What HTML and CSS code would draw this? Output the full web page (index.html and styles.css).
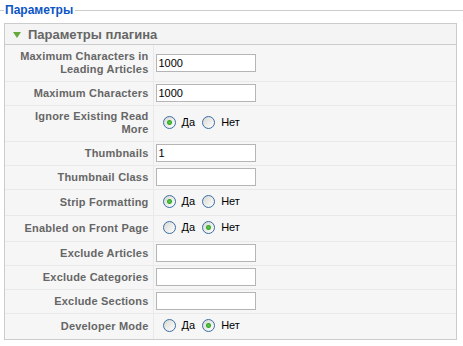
FILE: index.html
```html
<!DOCTYPE html>
<html lang="ru">
  <head>
    <meta charset="UTF-8" />
    <meta name="viewport" content="width=device-width, initial-scale=1.0" />
    <title>Параметры</title>
    <link rel="stylesheet" href="styles.css">
  </head>
  <body>
    <fieldset class="adminform">
      <legend>Параметры</legend>
      <div class="panel">
        <h3 class="title"><span class="toggler">Параметры плагина</span></h3>
        <table class="paramlist">
          <tr class="double">
            <td class="key">Maximum Characters in Leading Articles</td>
            <td class="value"><input type="text" class="text" value="1000" /></td>
          </tr>
          <tr>
            <td class="key">Maximum Characters</td>
            <td class="value"><input type="text" class="text" value="1000" /></td>
          </tr>
          <tr class="double">
            <td class="key">Ignore Existing Read More</td>
            <td class="value">
              <label><input type="radio" name="ignore" checked />Да</label>
              <label><input type="radio" name="ignore" />Нет</label>
            </td>
          </tr>
          <tr>
            <td class="key">Thumbnails</td>
            <td class="value"><input type="text" class="text" value="1" /></td>
          </tr>
          <tr>
            <td class="key">Thumbnail Class</td>
            <td class="value"><input type="text" class="text" value="" /></td>
          </tr>
          <tr class="choice">
            <td class="key">Strip Formatting</td>
            <td class="value">
              <label><input type="radio" name="strip" checked />Да</label>
              <label><input type="radio" name="strip" />Нет</label>
            </td>
          </tr>
          <tr class="choice">
            <td class="key">Enabled on Front Page</td>
            <td class="value">
              <label><input type="radio" name="front" />Да</label>
              <label><input type="radio" name="front" checked />Нет</label>
            </td>
          </tr>
          <tr>
            <td class="key">Exclude Articles</td>
            <td class="value"><input type="text" class="text" value="" /></td>
          </tr>
          <tr>
            <td class="key">Exclude Categories</td>
            <td class="value"><input type="text" class="text" value="" /></td>
          </tr>
          <tr>
            <td class="key">Exclude Sections</td>
            <td class="value"><input type="text" class="text" value="" /></td>
          </tr>
          <tr class="choice">
            <td class="key">Developer Mode</td>
            <td class="value">
              <label><input type="radio" name="dev" />Да</label>
              <label><input type="radio" name="dev" checked />Нет</label>
            </td>
          </tr>
        </table>
      </div>
    </fieldset>
  </body>
</html>
```

FILE: styles.css
```css
* {
  box-sizing: border-box;
}
body {
  margin: 0;
  overflow: hidden;
  font-family: "Liberation Sans", Arial, sans-serif;
  font-size: 11px;
  color: #333;
  background: #fff;
}
.adminform {
  margin: 3px -10px 0 -10px;
  padding: 6px 15px 10px 13px;
  border: 1px solid #ccc;
}
.adminform legend {
  padding: 0 2px 0 1px;
  color: #0b55c4;
  font-size: 12px;
  font-weight: bold;
  line-height: 14px;
}
.panel {
  border: 1px solid #ccc;
  background: #f6f6f6;
}
.panel .title {
  margin: 0;
  height: 21px;
  padding: 0 0 0 8px;
  display: flex;
  align-items: center;
  background: #f4f4f4;
  border-bottom: 1px solid #ccc;
  color: #666;
  font-size: 13px;
  font-weight: bold;
}
.toggler::before {
  content: "";
  display: inline-block;
  width: 0;
  height: 0;
  margin: 0 7px 1px 0;
  border-left: 4px solid transparent;
  border-right: 4px solid transparent;
  border-top: 6px solid #66a83a;
  vertical-align: middle;
}
.paramlist {
  width: 100%;
  border-collapse: collapse;
}
.paramlist td {
  height: 24px;
  padding: 0;
  border-bottom: 1px solid #e9e9e9;
  vertical-align: middle;
}
.paramlist tr:last-child td {
  border-bottom: none;
}
.paramlist .double td {
  height: 36px;
}
.paramlist .choice td {
  height: 26px;
}
.paramlist .key {
  width: 148px;
  padding: 0 4px 0 8px;
  border-right: 1px solid #e9e9e9;
  text-align: right;
  color: #666;
  font-weight: bold;
  line-height: 13px;
  letter-spacing: 0.2px;
}
.paramlist .value {
  padding-left: 2px;
}
.text {
  display: block;
  width: 100px;
  height: 18px;
  margin: 0;
  padding: 0 2px;
  border: 1px solid #b5b5b5;
  background: #fff;
  font-family: "Liberation Sans", Arial, sans-serif;
  font-size: 11px;
  color: #000;
}
.value label {
  display: inline-flex;
  align-items: center;
  color: #000;
  font-size: 11px;
}
.value input[type="radio"] {
  appearance: none;
  width: 13px;
  height: 13px;
  margin: 0 6px 0 7px;
  border: 1px solid #3a6ea5;
  border-radius: 50%;
  background: linear-gradient(135deg, #d8d8d2, #fff);
}
.value input[type="radio"]:checked {
  background: radial-gradient(circle, #5fcf4a 0, #38a82a 2px, transparent 3px),
    linear-gradient(135deg, #d8d8d2, #fff);
}
.value label + label input[type="radio"] {
  margin-left: 4px;
}
```
